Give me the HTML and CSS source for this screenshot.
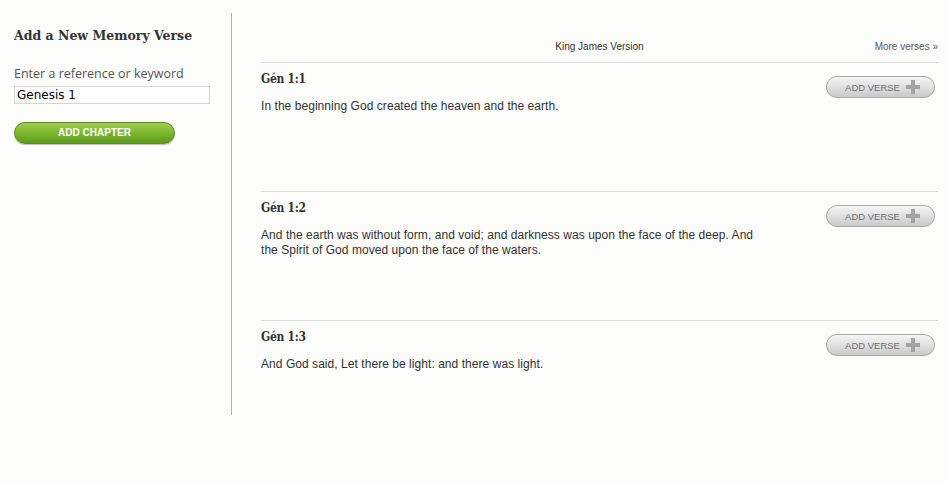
FILE: index.html
```html
<!DOCTYPE html>
<html>
<head>
<meta charset="utf-8">
<link rel="stylesheet" href="styles.css">
</head>
<body>
<div class="page">
  <aside class="sidebar">
    <h2 class="side-title">Add a New Memory Verse</h2>
    <label class="side-label" for="ref">Enter a reference or keyword</label>
    <input class="side-input" id="ref" type="text" value="Genesis 1">
    <button class="btn-green">ADD CHAPTER</button>
  </aside>
  <main class="main">
    <div class="topbar">
      <span></span>
      <span class="version">King James Version</span>
      <a class="more">More verses »</a>
    </div>
    <section class="verse">
      <div class="verse-body">
        <h3 class="verse-ref">Gén 1:1</h3>
        <p class="verse-text">In the beginning God created the heaven and the earth.</p>
      </div>
      <button class="btn-gray">ADD VERSE <svg class="plus" width="14" height="14" viewBox="0 0 14 14"><path d="M5 0h4v5h5v4H9v5H5V9H0V5h5z" fill="#a3a3a3"/></svg></button>
    </section>
    <section class="verse">
      <div class="verse-body">
        <h3 class="verse-ref">Gén 1:2</h3>
        <p class="verse-text">And the earth was without form, and void; and darkness was upon the face of the deep. And the Spirit of God moved upon the face of the waters.</p>
      </div>
      <button class="btn-gray">ADD VERSE <svg class="plus" width="14" height="14" viewBox="0 0 14 14"><path d="M5 0h4v5h5v4H9v5H5V9H0V5h5z" fill="#a3a3a3"/></svg></button>
    </section>
    <section class="verse last">
      <div class="verse-body">
        <h3 class="verse-ref">Gén 1:3</h3>
        <p class="verse-text">And God said, Let there be light: and there was light.</p>
      </div>
      <button class="btn-gray">ADD VERSE <svg class="plus" width="14" height="14" viewBox="0 0 14 14"><path d="M5 0h4v5h5v4H9v5H5V9H0V5h5z" fill="#a3a3a3"/></svg></button>
    </section>
  </main>
</div>
</body>
</html>
```
FILE: styles.css
```css
html, body {
  margin: 0;
  padding: 0;
  background: #fcfcfa;
}
body {
  font-family: "Liberation Sans", Arial, sans-serif;
  color: #333;
}
.page {
  display: flex;
  padding-top: 13px;
  width: 948px;
  box-sizing: border-box;
}
.sidebar {
  width: 232px;
  height: 402px;
  box-sizing: border-box;
  padding-left: 14px;
  border-right: 1px solid #b0b0b0;
  display: flex;
  flex-direction: column;
  align-items: flex-start;
  flex-shrink: 0;
}
.side-title {
  margin: 14px 0 0;
  font-family: "DejaVu Serif", Georgia, serif;
  font-weight: bold;
  font-size: 12.5px;
  line-height: 18px;
  color: #333;
}
.side-label {
  margin-top: 21px;
  font-family: "Open Sans", sans-serif;
  font-size: 12.5px;
  line-height: 16px;
  color: #555;
}
.side-input {
  margin-top: 4px;
  width: 196px;
  height: 18px;
  box-sizing: border-box;
  border: 1px solid #d6d6d6;
  background: #fff;
  padding: 0 2px;
  font-family: "DejaVu Sans", Verdana, sans-serif;
  font-size: 12px;
  color: #000;
  outline: none;
}
.btn-green {
  margin-top: 18px;
  width: 161px;
  height: 22px;
  border-radius: 11px;
  border: 1px solid #5a8f1c;
  background: linear-gradient(#9fd04a, #77b42c 55%, #5e981c);
  color: #fff;
  font-family: "Liberation Sans", Arial, sans-serif;
  font-weight: bold;
  font-size: 10px;
  padding: 0 0 1px;
  box-shadow: 0 1px 1px rgba(0,0,0,0.25);
}
.main {
  flex: 1;
  padding: 0 10px 0 29px;
}
.topbar {
  margin-top: 27px;
  display: grid;
  grid-template-columns: 1fr auto 1fr;
  font-size: 10px;
  line-height: 14px;
  padding-bottom: 8px;
  border-bottom: 1px solid #dcdcdc;
}
.version {
  color: #333;
}
.more {
  justify-self: end;
  color: #5a5a5a;
}
.verse {
  display: flex;
  justify-content: space-between;
  align-items: flex-start;
  height: 129px;
  box-sizing: border-box;
  border-bottom: 1px solid #dcdcdc;
}
.verse.last {
  border-bottom: none;
}
.verse-body {
  width: 510px;
}
.verse-ref {
  margin: 8px 0 0;
  font-family: "DejaVu Serif", Georgia, serif;
  font-stretch: condensed;
  font-weight: bold;
  font-size: 12px;
  line-height: 16px;
  letter-spacing: -0.3px;
  color: #333;
}
.verse-text {
  margin: 12px 0 0;
  font-size: 12px;
  line-height: 15px;
  letter-spacing: 0.05px;
  color: #333;
}
.btn-gray {
  margin-top: 13px;
  margin-right: 3px;
  width: 109px;
  height: 22px;
  border-radius: 11px;
  border: 1px solid #a9a9a9;
  background: linear-gradient(#f5f5f5, #dcdcdc 60%, #c9c9c9);
  color: #707070;
  font-family: "Liberation Sans", Arial, sans-serif;
  font-size: 9.5px;
  padding: 0 0 0 4px;
  display: flex;
  align-items: center;
  justify-content: center;
  gap: 6px;
}
.plus {
  display: block;
}
```
